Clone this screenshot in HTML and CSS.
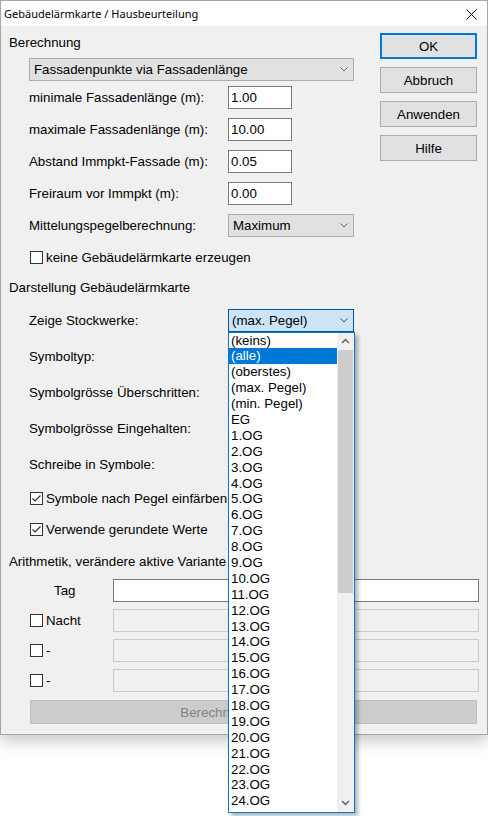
FILE: index.html
```html
<!DOCTYPE html>
<html lang="de">
<head>
    <meta charset="UTF-8">
    <meta name="viewport" content="width=device-width, initial-scale=1.0">
    <title>Gebäudelärmkarte / Hausbeurteilung</title>
    <link rel="stylesheet" href="styles.css">
</head>
<body>

<div class="window">

    <!-- Title bar -->
    <div class="titlebar">
        <span class="title">Gebäudelärmkarte / Hausbeurteilung</span>
        <svg class="close" width="11" height="11" viewBox="0 0 11 11">
            <path d="M0.5 0.5L10.5 10.5M10.5 0.5L0.5 10.5" stroke="#000" stroke-width="1" fill="none"/>
        </svg>
    </div>

    <div class="client">
        <div class="top">
            <div class="settings">

                <!-- Berechnung -->
                <div class="group-title">Berechnung</div>
                <div class="combo combo-wide">
                    <span>Fassadenpunkte via Fassadenlänge</span>
                    <svg class="chevron" width="8" height="5" viewBox="0 0 8 5"><path d="M0.5 0.5L4 4L7.5 0.5" stroke="#6d6d6d" fill="none"/></svg>
                </div>
                <div class="row">
                    <span class="label">minimale Fassadenlänge (m):</span>
                    <div class="textbox">1.00</div>
                </div>
                <div class="row">
                    <span class="label">maximale Fassadenlänge (m):</span>
                    <div class="textbox">10.00</div>
                </div>
                <div class="row">
                    <span class="label">Abstand Immpkt-Fassade (m):</span>
                    <div class="textbox">0.05</div>
                </div>
                <div class="row">
                    <span class="label">Freiraum vor Immpkt (m):</span>
                    <div class="textbox">0.00</div>
                </div>
                <div class="row">
                    <span class="label">Mittelungspegelberechnung:</span>
                    <div class="combo combo-small">
                        <span>Maximum</span>
                        <svg class="chevron" width="8" height="5" viewBox="0 0 8 5"><path d="M0.5 0.5L4 4L7.5 0.5" stroke="#6d6d6d" fill="none"/></svg>
                    </div>
                </div>
                <div class="row">
                    <div class="check"><span class="box"></span>keine Gebäudelärmkarte erzeugen</div>
                </div>

                <!-- Darstellung -->
                <div class="group-title group-spaced">Darstellung Gebäudelärmkarte</div>
                <div class="row row-tall">
                    <span class="label">Zeige Stockwerke:</span>
                    <div class="dropdown">
                        <div class="combo combo-small combo-open">
                            <span>(max. Pegel)</span>
                            <svg class="chevron" width="8" height="5" viewBox="0 0 8 5"><path d="M0.5 0.5L4 4L7.5 0.5" stroke="#4a4a4a" fill="none"/></svg>
                        </div>
                        <div class="listbox">
                            <div class="items">
                                <div class="item">(keins)</div>
                                <div class="item selected">(alle)</div>
                                <div class="item">(oberstes)</div>
                                <div class="item">(max. Pegel)</div>
                                <div class="item">(min. Pegel)</div>
                                <div class="item">EG</div>
                                <div class="item">1.OG</div>
                                <div class="item">2.OG</div>
                                <div class="item">3.OG</div>
                                <div class="item">4.OG</div>
                                <div class="item">5.OG</div>
                                <div class="item">6.OG</div>
                                <div class="item">7.OG</div>
                                <div class="item">8.OG</div>
                                <div class="item">9.OG</div>
                                <div class="item">10.OG</div>
                                <div class="item">11.OG</div>
                                <div class="item">12.OG</div>
                                <div class="item">13.OG</div>
                                <div class="item">14.OG</div>
                                <div class="item">15.OG</div>
                                <div class="item">16.OG</div>
                                <div class="item">17.OG</div>
                                <div class="item">18.OG</div>
                                <div class="item">19.OG</div>
                                <div class="item">20.OG</div>
                                <div class="item">21.OG</div>
                                <div class="item">22.OG</div>
                                <div class="item">23.OG</div>
                                <div class="item">24.OG</div>
                            </div>
                            <div class="scrollbar">
                                <div class="arrow">
                                    <svg width="9" height="6" viewBox="0 0 9 6"><path d="M1 5L4.5 1.5L8 5" stroke="#606060" stroke-width="1.5" fill="none"/></svg>
                                </div>
                                <div class="track"><div class="thumb"></div></div>
                                <div class="arrow">
                                    <svg width="9" height="6" viewBox="0 0 9 6"><path d="M1 1L4.5 4.5L8 1" stroke="#606060" stroke-width="1.5" fill="none"/></svg>
                                </div>
                            </div>
                        </div>
                    </div>
                </div>
                <div class="row row-tall"><span class="label">Symboltyp:</span></div>
                <div class="row row-tall"><span class="label">Symbolgrösse Überschritten:</span></div>
                <div class="row row-tall"><span class="label">Symbolgrösse Eingehalten:</span></div>
                <div class="row row-tall"><span class="label">Schreibe in Symbole:</span></div>
                <div class="row">
                    <div class="check">
                        <span class="box"><svg width="11" height="11" viewBox="0 0 11 11"><path d="M1.5 5.5L4 8L9.5 2.5" stroke="#333" stroke-width="1.2" fill="none"/></svg></span>
                        Symbole nach Pegel einfärben
                    </div>
                </div>
                <div class="row row-short">
                    <div class="check">
                        <span class="box"><svg width="11" height="11" viewBox="0 0 11 11"><path d="M1.5 5.5L4 8L9.5 2.5" stroke="#333" stroke-width="1.2" fill="none"/></svg></span>
                        Verwende gerundete Werte
                    </div>
                </div>
            </div>

            <!-- Dialog buttons -->
            <div class="buttons">
                <div class="button default">OK</div>
                <div class="button">Abbruch</div>
                <div class="button">Anwenden</div>
                <div class="button">Hilfe</div>
            </div>
        </div>

        <!-- Arithmetik -->
        <div class="group-title group-arith">Arithmetik, verändere aktive Variante</div>
        <div class="arith">
            <span class="arith-label tag">Tag</span>
            <div class="field"></div>
            <div class="check"><span class="box"></span>Nacht</div>
            <div class="field disabled"></div>
            <div class="check"><span class="box"></span>-</div>
            <div class="field disabled"></div>
            <div class="check"><span class="box"></span>-</div>
            <div class="field disabled"></div>
        </div>
        <div class="calc-button"><span class="calc-text">Berechnung durchführen</span></div>
    </div>
</div>

</body>
</html>
```

FILE: styles.css
```css
html {
    background-color: #ffffff;
}

body {
    margin: 0;
    padding: 0;
    min-height: 100vh;
    background-color: #ffffff;
    font-family: "Liberation Sans", Arial, sans-serif;
    font-size: 13.3px;
    color: #000000;
}

/* Dialog frame */
.window {
    width: 488px;
    box-sizing: border-box;
    border: 1px solid #a6a6a6;
    background-color: #f0f0f0;
    box-shadow: 0 6px 14px rgba(0, 0, 0, 0.22);
}

.titlebar {
    height: 25px;
    background-color: #ffffff;
    display: flex;
    align-items: center;
    justify-content: space-between;
    padding: 0 10px 0 3px;
}

.title {
    font-family: "Noto Sans", sans-serif;
    font-size: 11px;
}

.close {
    margin-top: 2px;
}

.client {
    padding: 7px 8px 10px 8px;
}

.top {
    display: flex;
    gap: 26px;
}

.settings {
    width: 345px;
}

/* Group headings */
.group-title {
    height: 20px;
    line-height: 20px;
}

.group-spaced {
    margin: 5px 0 4px 0;
}

.group-arith {
    margin-top: 8px;
}

/* Rows with a label on the left and a control on the right */
.row {
    height: 32px;
    display: flex;
    align-items: center;
    padding-left: 20px;
}

.row-tall {
    height: 36px;
}

.row-short {
    height: 30px;
}

.label {
    width: 199px;
    flex-shrink: 0;
}

.textbox {
    width: 64px;
    height: 23px;
    box-sizing: border-box;
    border: 1px solid #7a7a7a;
    background-color: #ffffff;
    padding-left: 2px;
    line-height: 21px;
}

/* Combo boxes */
.combo {
    height: 23px;
    box-sizing: border-box;
    border: 1px solid #adadad;
    background-color: #e1e1e1;
    display: flex;
    align-items: center;
    justify-content: space-between;
    padding: 0 5px 0 4px;
}

.combo-wide {
    margin: 5px 0 0 20px;
}

.combo-small {
    width: 126px;
}

.combo-open {
    background-color: #cce4f7;
    border-color: #005499;
    padding-left: 3px;
}

.chevron {
    flex-shrink: 0;
}

/* Opened drop-down list */
.dropdown {
    position: relative;
}

.listbox {
    position: absolute;
    left: 0;
    top: 23px;
    width: 127px;
    height: 481px;
    box-sizing: border-box;
    border: 1px solid #0078d7;
    background-color: #ffffff;
    display: flex;
    box-shadow: 3px 3px 4px rgba(0, 0, 0, 0.3);
    z-index: 10;
}

.items {
    flex: 1;
    overflow: hidden;
}

.item {
    height: 15.9px;
    line-height: 15.9px;
    padding-left: 2px;
    white-space: nowrap;
}

.item.selected {
    background-color: #0078d7;
    color: #ffffff;
}

.scrollbar {
    width: 17px;
    background-color: #f0f0f0;
    display: flex;
    flex-direction: column;
}

.arrow {
    height: 17px;
    display: flex;
    align-items: center;
    justify-content: center;
}

.track {
    flex: 1;
    padding: 0 1px;
}

.thumb {
    height: 243px;
    background-color: #cdcdcd;
}

/* Check boxes */
.check {
    display: flex;
    align-items: center;
    gap: 3px;
    margin-left: 1px;
}

.box {
    width: 13px;
    height: 13px;
    box-sizing: border-box;
    border: 1px solid #333333;
    background-color: #ffffff;
    display: flex;
    align-items: center;
    justify-content: center;
}

/* Right hand buttons */
.buttons {
    width: 97px;
    display: flex;
    flex-direction: column;
    gap: 8px;
}

.button {
    height: 26px;
    box-sizing: border-box;
    border: 1px solid #adadad;
    background-color: #e1e1e1;
    display: flex;
    align-items: center;
    justify-content: center;
}

.button.default {
    border: 2px solid #0078d7;
}

/* Arithmetik grid */
.arith {
    margin: 3px 0 0 21px;
    display: grid;
    grid-template-columns: 83px 366px;
    grid-auto-rows: 30px;
    align-items: center;
}

.arith .check {
    margin-left: 0;
}

.tag {
    padding-left: 24px;
}

.field {
    height: 23px;
    box-sizing: border-box;
    border: 1px solid #7a7a7a;
    background-color: #ffffff;
}

.field.disabled {
    border-color: #cccccc;
    background-color: #f0f0f0;
}

.calc-button {
    margin: 5px 0 0 21px;
    width: 447px;
    height: 24px;
    box-sizing: border-box;
    border: 1px solid #bfbfbf;
    background-color: #cccccc;
    color: #838383;
    display: flex;
    align-items: center;
    justify-content: center;
}
```
